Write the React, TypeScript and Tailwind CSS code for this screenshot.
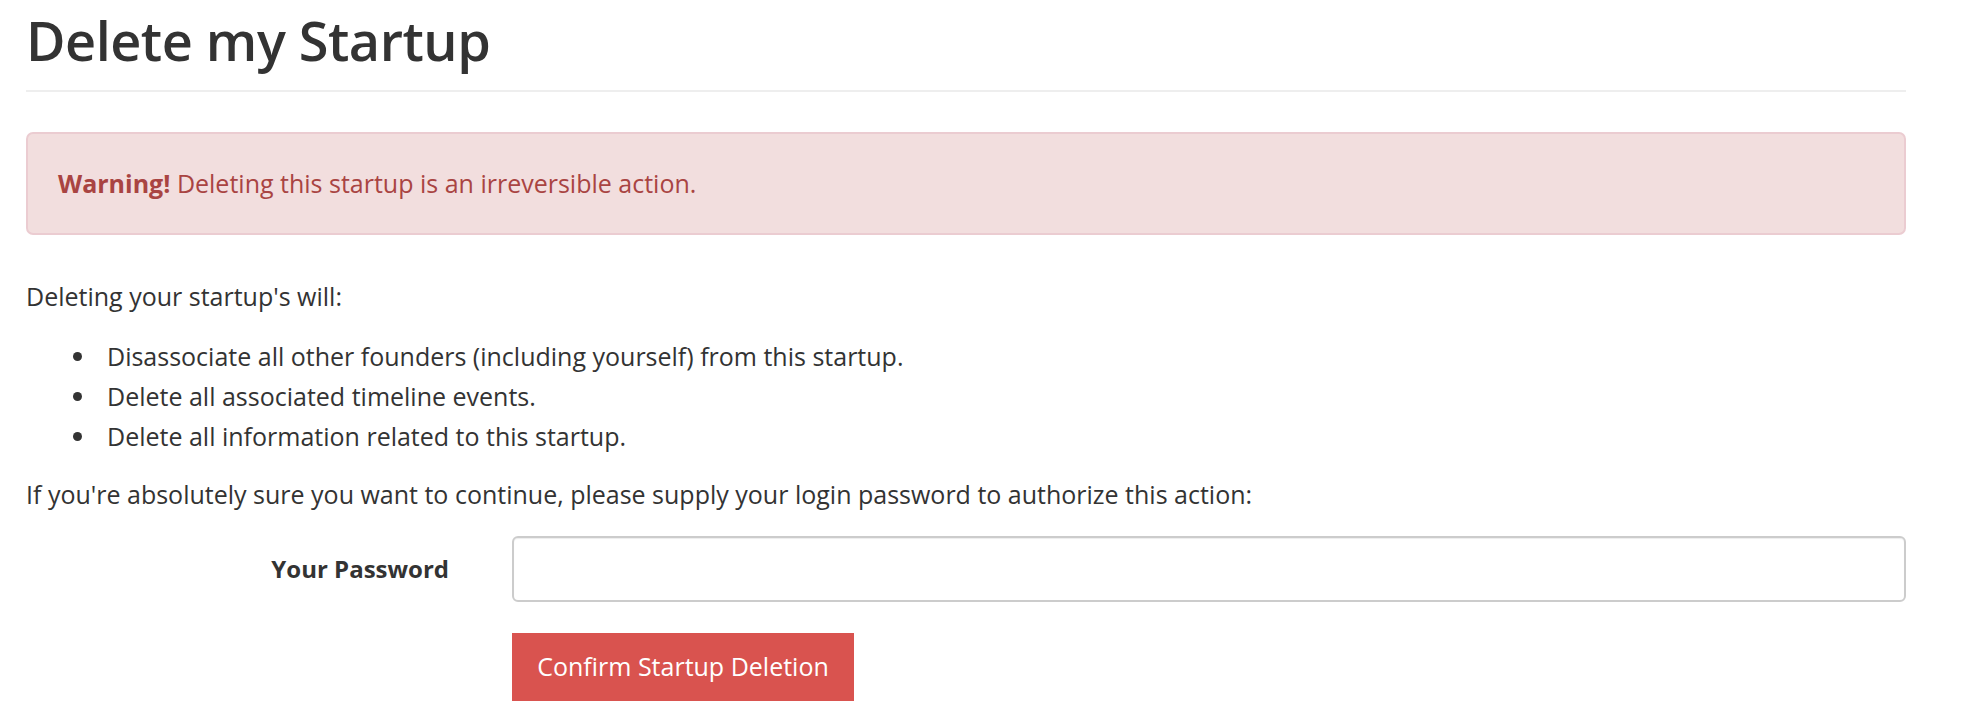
export default function App() {
  const consequences = [
    "Disassociate all other founders (including yourself) from this startup.",
    "Delete all associated timeline events.",
    "Delete all information related to this startup.",
  ];

  return (
    <div className="min-h-[718px] bg-white font-['Open_Sans',sans-serif] text-[#333]">
      <div className="ml-[26px] w-[1880px]">
        <h1 className="pt-[8px] text-[54px] font-semibold leading-[64px] tracking-[-0.5px]">Delete my Startup</h1>
        <hr className="mt-[18px] border-t-2 border-[#eee]" />

        {/* Alert */}
        <div className="mt-[40px] rounded-[7px] border-2 border-[#ebccd1] bg-[#f2dede] px-[30px] pt-[29px] pb-[30px] text-[25px] leading-[40px] text-[#a94442]">
          <strong className="font-bold">Warning!</strong> Deleting this startup is an irreversible action.
        </div>

        <p className="mt-[41px] text-[25px] leading-[40px]">Deleting your startup's will:</p>
        <ul className="mt-[20px]">
          {consequences.map((item) => (
            <li key={item} className="flex items-center text-[25px] leading-[40px]">
              <span className="ml-[47px] mr-[25px] h-[9px] w-[9px] rounded-full bg-[#333]" />
              {item}
            </li>
          ))}
        </ul>
        <p className="mt-[18px] text-[25px] leading-[40px]">
          If you're absolutely sure you want to continue, please supply your login password to authorize this action:
        </p>

        {/* Password form */}
        <form className="mt-[22px]" onSubmit={(e) => e.preventDefault()}>
          <div className="flex items-center">
            <label htmlFor="password" className="w-[423px] text-right text-[24px] font-bold">
              Your Password
            </label>
            <input
              id="password"
              type="password"
              className="ml-[63px] h-[66px] flex-1 rounded-[6px] border-2 border-[#ccc] bg-white px-[20px] text-[25px] shadow-[inset_0_1px_1px_rgba(0,0,0,0.075)] outline-none"
            />
          </div>
          <button
            type="submit"
            className="mt-[31px] ml-[486px] h-[68px] w-[342px] bg-[#d9534f] text-[25px] text-white"
          >
            Confirm Startup Deletion
          </button>
        </form>
      </div>
    </div>
  );
}
